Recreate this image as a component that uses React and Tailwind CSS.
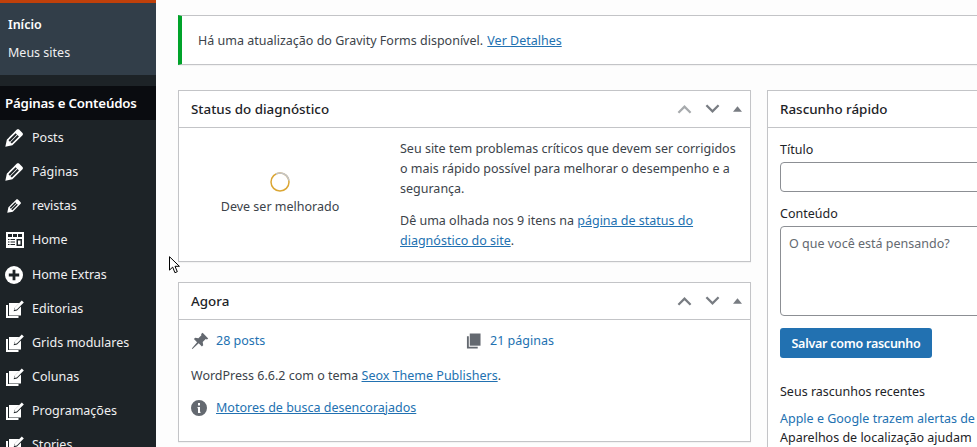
const font = { fontFamily: '"Noto Sans", sans-serif' };

function Pencil({ small }) {
  return (
    <svg viewBox="2.8 3 14.2 14" className={small ? "w-[14px] h-[14px] ml-[2px]" : "w-[18px] h-[18px]"} fill="#fff">
      <path d="M13.89 3.39l2.71 2.72c.46.46.42 1.24.03 1.64l-8.01 8.02-5.56 1.16 1.16-5.58s7.6-7.63 7.99-8.03c.39-.39 1.22-.39 1.68.07zm-2.73 2.79l-5.59 5.61 1.11 1.11 5.54-5.65zm-2.97 8.23l5.58-5.6-1.07-1.08-5.59 5.6z" />
    </svg>
  );
}
function TableIcon() {
  return (
    <svg viewBox="0 0 18 16" className="w-[18px] h-[16px] ml-[1px]">
      <rect x="0" y="0" width="18" height="16" fill="#fff" />
      <path d="M2 2h4v3H2zM7 2h4v3H7zM12 2h4v3h-4zM2 7h1.500v1H2zM4.500 7H9v1H4.500zM2 9.500h1.500v1H2zM4.500 9.500H9v1H4.500zM2 12h1.500v1H2zM4.500 12H9v1H4.500z" fill="#1d2327" />
      <path fillRule="evenodd" d="M10.500 7H16v7h-5.500zM12 8.500v4h2.500v-4z" fill="#1d2327" />
    </svg>
  );
}
function PlusCircle() {
  return (
    <svg viewBox="0 0 18 18" className="w-[18px] h-[18px]">
      <circle cx="9" cy="9" r="9" fill="#fff" />
      <path d="M7.600 3.800h2.800v3.800h3.800v2.800h-3.800v3.800H7.600v-3.800H3.800V7.600h3.800z" fill="#1d2327" />
    </svg>
  );
}
function PagesEdit() {
  return (
    <svg viewBox="0 0 18 18" className="w-[18px] h-[18px] ml-[1px]" fill="#fff">
      <path d="M0 5h2v11h10.500v2H0z" />
      <path d="M3 3h10.500l-5 5-.8 3.300 3.300-.8 4-4V15.500H3z" />
      <path d="M15.800 .5l2 2-7 7-2.500.5.5-2.500z" />
    </svg>
  );
}

const menu = [
  ["Posts", <Pencil />],
  ["Páginas", <Pencil />],
  ["revistas", <Pencil small />],
  ["Home", <TableIcon />],
  ["Home Extras", <PlusCircle />],
  ["Editorias", <PagesEdit />],
  ["Grids modulares", <PagesEdit />],
  ["Colunas", <PagesEdit />],
  ["Programações", <PagesEdit />],
  ["Stories", <PagesEdit />],
];

function Controls({ upColor }) {
  return (
    <div className="flex items-center">
      <svg viewBox="0 0 16 10" className="w-[15px] h-[10px] mr-[13px]" fill="none" stroke={upColor} strokeWidth="2.400"><path d="M1.500 9L8 2.500 14.500 9" /></svg>
      <svg viewBox="0 0 16 10" className="w-[15px] h-[10px] mr-[13px]" fill="none" stroke="#787c82" strokeWidth="2.400"><path d="M1.500 1L8 7.500 14.500 1" /></svg>
      <svg viewBox="0 0 10 6" className="w-[9px] h-[6px]" fill="#787c82"><path d="M5 0l5 6H0z" /></svg>
    </div>
  );
}
function Panel({ title, children, controls = true, upColor = "#787c82", className = "" }) {
  return (
    <section className={`bg-white border border-[#c3c4c7] shadow-[0_1px_1px_rgba(0,0,0,0.04)] ${className}`}>
      <div className="h-[37px] border-b border-[#c3c4c7] flex items-center justify-between pl-[12px] pr-[8px]">
        <h2 className="text-[13.4px] font-medium text-[#1d2327]">{title}</h2>
        {controls && <Controls upColor={upColor} />}
      </div>
      {children}
    </section>
  );
}

const link = "text-[#2271b1] underline";

export default function App() {
  return (
    <div style={font} className="relative w-[977px] h-[447px] overflow-hidden flex bg-[#fdfdfd] text-[12.5px] text-[#3c434a]">
      <aside className="w-[156px] shrink-0 bg-[#1d2327] text-white">
        <div className="h-[3px] bg-[#c0400a]" />
        <div className="h-[72px] bg-[#323e49] pl-[8px] pt-[9px]">
          <div className="h-[28px] leading-[26px] font-semibold">Início</div>
          <div className="h-[28px] leading-[26px] text-[#f0f0f1]">Meus sites</div>
        </div>
        <div className="h-[11px]" />
        <div className="h-[34px] bg-[#0a0c10] pl-[5px] leading-[34px] font-semibold text-[13.3px] tracking-[-0.2px] whitespace-nowrap">Páginas e Conteúdos</div>
        <div className="pt-[1px]">
          {menu.map(([label, icon], i) => (
            <div key={label} className={`h-[34px] flex items-center text-[#f0f0f1] ${i === 4 ? "mt-[1px]" : ""}`}>
              <span className="w-[32px] pl-[5px] flex items-center justify-start shrink-0">{icon}</span>
              <span className="whitespace-nowrap">{label}</span>
            </div>
          ))}
        </div>
      </aside>

      <main className="flex-1 min-w-0 pl-[22px] pt-[15px]">
        <div className="w-[830px] h-[50px] bg-white border border-[#c3c4c7] border-l-[4px] border-l-[#00a32a] shadow-[0_1px_1px_rgba(0,0,0,0.04)] flex items-center pl-[16px] pt-[2px]">
          Há uma atualização do Gravity Forms disponível.&nbsp;<a className={`${link} ml-[1px]`}>Ver Detalhes</a>
        </div>

        <div className="flex gap-[16px] mt-[25px] w-[830px]">
          <div className="w-[573px] shrink-0 flex flex-col gap-[20px]">
            <Panel title="Status do diagnóstico" upColor="#a7aaad" className="h-[172px]">
              <div className="flex">
                <div className="w-[202px] shrink-0 flex flex-col items-center pt-[44px]">
                  <svg viewBox="0 0 20 20" className="w-[20px] h-[20px]" fill="none" strokeWidth="1.500">
                    <circle cx="10" cy="10" r="9" stroke="#dba633" />
                    <path d="M6 2a9 9 0 0 1 12.900 6.500" stroke="#c3c4c7" />
                  </svg>
                  <div className="mt-[5px] leading-[20px]">Deve ser melhorado</div>
                </div>
                <div className="flex-1 pl-[19px] pt-[11px] pr-[12px] leading-[20px]">
                  <p>Seu site tem problemas críticos que devem ser corrigidos o mais rápido possível para melhorar o desempenho e a segurança.</p>
                  <p className="mt-[12px]">Dê uma olhada nos 9 itens na <a className={link}>página de status do diagnóstico do site</a>.</p>
                </div>
              </div>
            </Panel>
            <Panel title="Agora" className="h-[160px]">
              <div className="px-[12px] pt-[11px]">
                <div className="flex">
                  <div className="w-[276px] flex items-center h-[20px]">
                    <svg viewBox="0 0 20 20" className="w-[20px] h-[20px] mr-[6px] -ml-[1px]" fill="#646970"><path d="M12.600 1.800l5.600 5.600-1.200 1-1.300-.4-3 3 .5 3.200-1.300 1.300-3.200-3.200L2.500 18l-.7-.4 5.300-6.300L3.900 8l1.300-1.300 3.200.6 3-3-.3-1.400z" /></svg>
                    <a className="text-[#2271b1]">28 posts</a>
                  </div>
                  <div className="flex items-center h-[20px]">
                    <svg viewBox="0 0 16 16" className="w-[15px] h-[16px] mr-[9px] -ml-[1px]" fill="#646970"><path d="M4 0h11.500v13H4z" /><path d="M1 3h2v11h9.500v2H1z" /></svg>
                    <a className="text-[#2271b1]">21 páginas</a>
                  </div>
                </div>
                <p className="mt-[15px] leading-[20px]">WordPress 6.6.2 com o tema <a className={link}>Seox Theme Publishers</a>.</p>
                <div className="flex items-center mt-[12px] h-[20px]">
                  <svg viewBox="0 0 16 16" className="w-[16px] h-[16px] mr-[9px]" fill="#646970"><path fillRule="evenodd" d="M8 0a8 8 0 1 1 0 16A8 8 0 0 1 8 0zM7 3v2.500h2V3zM6.500 7v1.300H7V13h2.500v-1.200H9V7z" /></svg>
                  <a className={link}>Motores de busca desencorajados</a>
                </div>
              </div>
            </Panel>
          </div>

          <Panel title="Rascunho rápido" controls={false} className="w-[400px] shrink-0 h-[500px]">
            <div className="pl-[12px] pt-[12px]">
              <label className="block leading-[20px] text-[#1d2327]">Título</label>
              <div className="mt-[2px] h-[30px] w-[380px] bg-white border border-[#8c8f94] rounded-[4px]" />
              <label className="block mt-[12px] leading-[20px] text-[#1d2327]">Conteúdo</label>
              <div className="mt-[2px] h-[90px] w-[380px] bg-white border border-[#8c8f94] rounded-[4px] px-[8px] pt-[7px] leading-[20px] text-[#646970]">O que você está pensando?</div>
              <button className="mt-[12px] h-[30px] w-[152px] pt-[2px] bg-[#2271b1] rounded-[3px] text-white font-semibold text-[12.5px] tracking-[-0.25px] whitespace-nowrap">Salvar como rascunho</button>
              <div className="mt-[24px] leading-[20px] text-[#1d2327]">Seus rascunhos recentes</div>
              <div className="mt-[7px] leading-[19px] whitespace-nowrap"><a className="text-[#2271b1]">Apple e Google trazem alertas de</a></div>
              <div className="leading-[19px] whitespace-nowrap text-[#1d2327]">Aparelhos de localização ajudam</div>
            </div>
          </Panel>
        </div>
      </main>

      <svg viewBox="0 0 12 18" className="absolute left-[169px] top-[256px] w-[12px] h-[18px]" fill="#fff" stroke="#000" strokeWidth="1">
        <path d="M.5.700v13.400l3.200-3 2.200 5.600 2.400-1-2.300-5.400h4.400z" />
      </svg>
    </div>
  );
}
